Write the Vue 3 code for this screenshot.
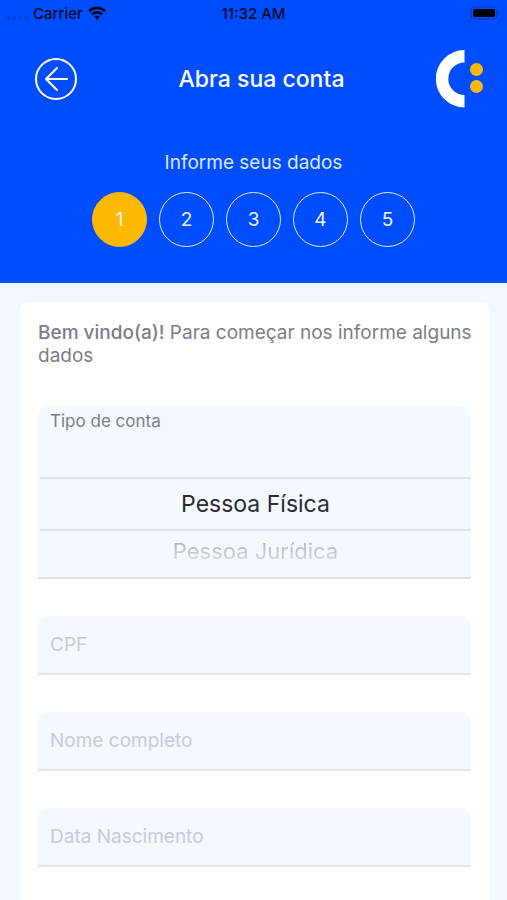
<script setup>
import { ref } from 'vue';

const steps = [1, 2, 3, 4, 5];
const currentStep = ref(1);

const accountTypes = [
  { value: 'pf', label: 'Pessoa Física' },
  { value: 'pj', label: 'Pessoa Jurídica' },
];
const accountType = ref('pf');

const fields = ref([
  { id: 'cpf', label: 'CPF', value: '' },
  { id: 'nome', label: 'Nome completo', value: '' },
  { id: 'nascimento', label: 'Data Nascimento', value: '' },
]);
</script>

<template>
  <div class="page">
    <header class="header">
      <div class="status-bar">
        <div class="carrier">
          <span class="signal"><i></i><i></i><i></i><i></i></span>
          <span>Carrier</span>
          <svg width="18" height="14" viewBox="0 0 18 14">
            <g fill="none" stroke="#000a22" stroke-width="2.6">
              <path d="M1 5.2a11.4 11.4 0 0 1 16 0" />
              <path d="M4 8.4a7.1 7.1 0 0 1 10 0" />
            </g>
            <path d="M9 13.8 6.2 10.8a4 4 0 0 1 5.6 0z" fill="#000a22" />
          </svg>
        </div>
        <span>11:32 AM</span>
        <div class="battery">
          <svg width="30" height="14" viewBox="0 0 30 14">
            <rect x="1" y="1" width="26" height="12" rx="4" fill="none" stroke="#0038b8" />
            <rect x="3" y="3" width="22" height="8" rx="2" fill="#000" />
            <path d="M28 5v4q2-2 0-4" fill="#0038b8" />
          </svg>
        </div>
      </div>

      <div class="nav">
        <button class="back" type="button" aria-label="Voltar">
          <svg width="42" height="42" viewBox="0 0 42 42" fill="none" stroke="#fff" stroke-width="2">
            <circle cx="21" cy="21" r="20" />
            <path d="M32 21H11M22 10 11 21l11 11" stroke-linecap="round" stroke-linejoin="round" />
          </svg>
        </button>
        <h1 class="title">Abra sua conta</h1>
        <svg width="48" height="58" viewBox="0 0 48 58">
          <path d="M28.5 0v12.500a16.200 16.200 0 0 0 0 32.400v12.500a28.700 28.700 0 0 1 0-57.400z" fill="#fff" />
          <circle cx="40.500" cy="19.500" r="6.500" fill="#fdb90b" />
          <circle cx="40.500" cy="36.500" r="6.500" fill="#fdb90b" />
        </svg>
      </div>

      <p class="subtitle">Informe seus dados</p>
      <ol class="steps">
        <li v-for="step in steps" :key="step" class="step" :class="{ active: step === currentStep }">
          {{ step }}
        </li>
      </ol>
    </header>

    <main class="card">
      <p class="welcome"><strong>Bem vindo(a)!</strong> Para começar nos informe alguns dados</p>

      <form class="form">
        <div class="picker" role="radiogroup" aria-labelledby="tipo-conta">
          <span id="tipo-conta" class="picker-label">Tipo de conta</span>
          <label v-for="type in accountTypes" :key="type.value" class="option">
            <input v-model="accountType" type="radio" name="tipo" :value="type.value" />
            <span>{{ type.label }}</span>
          </label>
        </div>

        <div v-for="field in fields" :key="field.id">
          <label :for="field.id" class="sr-only">{{ field.label }}</label>
          <input :id="field.id" v-model="field.value" class="field" type="text" :placeholder="field.label" />
        </div>
      </form>
    </main>
  </div>
</template>

<style>
body {
  margin: 0;
  background: #f4f8ff;
}
</style>

<style scoped>
.page {
  display: flex;
  flex-direction: column;
  min-height: 100vh;
  font-family: Inter, 'Liberation Sans', sans-serif;
}

.header {
  padding-bottom: 36px;
  background: #004dff;
  color: #fff;
}

.status-bar {
  display: grid;
  grid-template-columns: 1fr auto 1fr;
  align-items: center;
  height: 26px;
  padding: 0 7px;
  font-size: 15px;
  font-weight: 500;
  color: #000a22;
}

.carrier {
  display: flex;
  align-items: center;
  gap: 5px;
}

.signal {
  display: flex;
  gap: 3px;
  padding-top: 9px;
}

.signal i {
  width: 3px;
  height: 3px;
  border-radius: 50%;
  background: #003cc8;
}

.battery {
  display: flex;
  justify-content: flex-end;
}

.nav {
  display: flex;
  align-items: center;
  padding: 24px 23px 0 35px;
}

.back {
  display: flex;
  padding: 0;
  border: none;
  background: none;
  cursor: pointer;
}

.title {
  flex: 1;
  margin: 0;
  padding-left: 10px;
  text-align: center;
  font-size: 23px;
  font-weight: 500;
}

.subtitle {
  margin: 43px 0 17px;
  text-align: center;
  font-size: 19px;
  line-height: 24px;
  color: #dce9ff;
}

.steps {
  display: flex;
  justify-content: center;
  gap: 12px;
  margin: 0;
  padding: 0;
  list-style: none;
}

.step {
  display: flex;
  align-items: center;
  justify-content: center;
  box-sizing: border-box;
  width: 55px;
  height: 55px;
  border: 1px solid #dce9ff;
  border-radius: 50%;
  font-size: 19px;
  color: #eef4ff;
}

.step.active {
  border-color: #fdb900;
  background: #fdb900;
}

.card {
  flex: 1;
  margin: 19px 18px 0 20px;
  padding: 19px 18px 34px;
  border-radius: 8px 8px 0 0;
  background: #fff;
}

.welcome {
  margin: 0 -10px 39px 0;
  font-size: 19px;
  line-height: 23px;
  color: #7c7c8a;
}

.welcome strong {
  font-weight: 500;
}

.form {
  display: flex;
  flex-direction: column;
  gap: 37px;
}

.picker {
  display: flex;
  flex-direction: column;
  border-bottom: 2px solid #dddfe3;
  border-radius: 10px 10px 0 0;
  background: #f4f8ff;
}

.picker-label {
  height: 71px;
  box-sizing: border-box;
  padding: 4px 12px;
  font-size: 17px;
  line-height: 22px;
  color: #7c7c8a;
}

.option {
  display: flex;
  justify-content: center;
  height: 46px;
  margin-left: 2px;
  font-size: 22px;
  line-height: 40px;
  cursor: pointer;
}

.option:has(input:checked) {
  height: 50px;
  border: solid #dce0e8;
  border-width: 2px 0;
  font-size: 23px;
  line-height: 50px;
  color: #2c2c30;
}

.option:not(:has(input:checked)) span {
  height: 40px;
  background: linear-gradient(#b4b7be 30%, #d4d8df 75%);
  background-clip: text;
  color: transparent;
}

.option input,
.sr-only {
  position: absolute;
  width: 1px;
  height: 1px;
  margin: 0;
  overflow: hidden;
  opacity: 0;
}

.field {
  display: block;
  box-sizing: border-box;
  width: 100%;
  height: 59px;
  padding: 0 12px;
  border: none;
  border-bottom: 2px solid #e3e5e9;
  border-radius: 10px 10px 0 0;
  outline: none;
  background: #f4f8ff;
  font-family: inherit;
  font-size: 19px;
  color: #2c2c30;
}

.field::placeholder {
  color: #c8cad6;
}
</style>
